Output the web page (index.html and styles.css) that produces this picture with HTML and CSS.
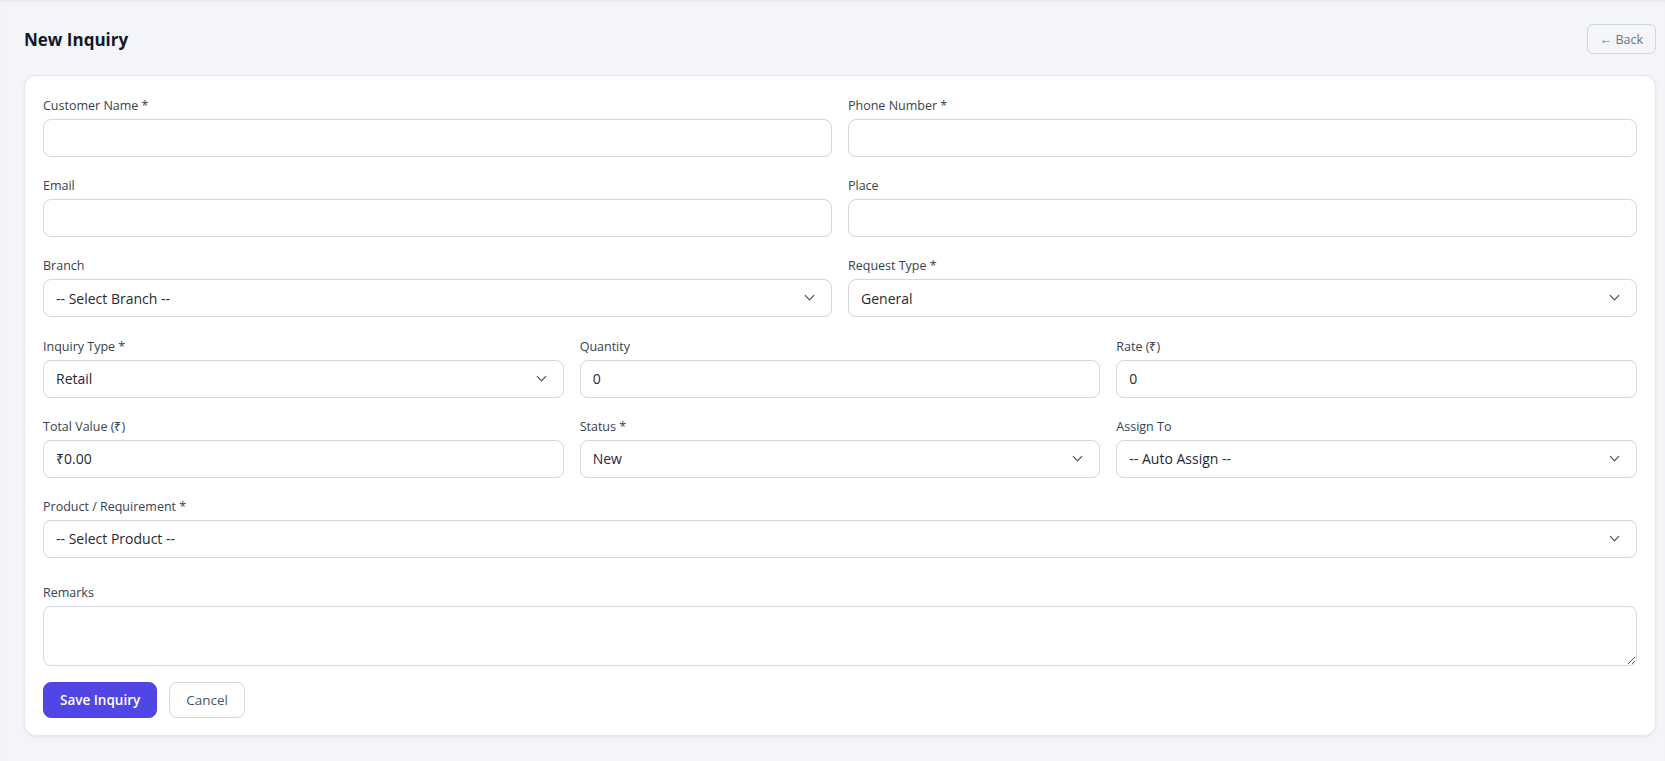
FILE: index.html
```html
<!DOCTYPE html>
<html>
<head>
  <link rel="stylesheet" href="styles.css">
</head>
<body>
  <div class="page">
    <div class="page-header">
      <h2>New Inquiry</h2>
      <button type="button" class="btn-back">&larr; Back</button>
    </div>

    <form class="card">
      <div class="form-row">
        <div class="form-group">
          <label for="customerName">Customer Name *</label>
          <input type="text" id="customerName">
        </div>
        <div class="form-group">
          <label for="phone">Phone Number *</label>
          <input type="text" id="phone">
        </div>
      </div>

      <div class="form-row">
        <div class="form-group">
          <label for="email">Email</label>
          <input type="email" id="email">
        </div>
        <div class="form-group">
          <label for="place">Place</label>
          <input type="text" id="place">
        </div>
      </div>

      <div class="form-row">
        <div class="form-group">
          <label for="branch">Branch</label>
          <div class="select-wrap">
            <select id="branch">
              <option>-- Select Branch --</option>
            </select>
          </div>
        </div>
        <div class="form-group">
          <label for="requestType">Request Type *</label>
          <div class="select-wrap">
            <select id="requestType">
              <option>General</option>
            </select>
          </div>
        </div>
      </div>

      <div class="form-row cols-3">
        <div class="form-group">
          <label for="inquiryType">Inquiry Type *</label>
          <div class="select-wrap">
            <select id="inquiryType">
              <option>Retail</option>
            </select>
          </div>
        </div>
        <div class="form-group">
          <label for="quantity">Quantity</label>
          <input type="number" id="quantity" value="0">
        </div>
        <div class="form-group">
          <label for="rate">Rate (₹)</label>
          <input type="number" id="rate" value="0">
        </div>
      </div>

      <div class="form-row cols-3">
        <div class="form-group">
          <label for="totalValue">Total Value (₹)</label>
          <input type="text" id="totalValue" value="₹0.00" readonly>
        </div>
        <div class="form-group">
          <label for="status">Status *</label>
          <div class="select-wrap">
            <select id="status">
              <option>New</option>
            </select>
          </div>
        </div>
        <div class="form-group">
          <label for="assignTo">Assign To</label>
          <div class="select-wrap">
            <select id="assignTo">
              <option>-- Auto Assign --</option>
            </select>
          </div>
        </div>
      </div>

      <div class="form-row cols-1">
        <div class="form-group">
          <label for="product">Product / Requirement *</label>
          <div class="select-wrap">
            <select id="product">
              <option>-- Select Product --</option>
            </select>
          </div>
        </div>
      </div>

      <div class="form-group remarks">
        <label for="remarks">Remarks</label>
        <textarea id="remarks"></textarea>
      </div>

      <div class="form-actions">
        <button type="submit" class="btn-primary">Save Inquiry</button>
        <button type="button" class="btn-secondary">Cancel</button>
      </div>
    </form>
  </div>
</body>
</html>
```

FILE: styles.css
```css
body {
  font-family: "Segoe UI", "Open Sans", sans-serif;
  margin: 0;
  background: #f4f5f9;
  color: #1f2937;
  min-height: 100vh;
  box-shadow: inset 0 2px 3px -1px rgba(0, 0, 0, 0.08);
}

.page {
  padding: 24px 9px 24px 24px;
}

.page-header {
  display: flex;
  align-items: center;
  justify-content: space-between;
  height: 30px;
  margin-bottom: 21px;
}

.page-header h2 {
  margin: 0;
  font-size: 17px;
  font-weight: 700;
  color: #111827;
}

.btn-back {
  height: 30px;
  padding: 0 12px;
  font-family: inherit;
  font-size: 12.5px;
  color: #6b7280;
  background: transparent;
  border: 1px solid #d4d6dd;
  border-radius: 6px;
  cursor: pointer;
}

.card {
  display: block;
  background: #fff;
  border: 1px solid #e5e7eb;
  border-radius: 12px;
  padding: 18px 18px 17px;
  box-shadow: 0 1px 3px rgba(0, 0, 0, 0.08);
}

.form-row {
  display: grid;
  grid-template-columns: 1fr 1fr;
  column-gap: 16px;
  margin-bottom: 17.2px;
}

.form-row.cols-3 {
  grid-template-columns: 1fr 1fr 1fr;
}

.form-row.cols-1 {
  grid-template-columns: 1fr;
}

.form-group label {
  display: block;
  font-size: 12.5px;
  line-height: 19px;
  font-weight: 500;
  color: #374151;
  padding-top: 2px;
  margin-bottom: 4px;
}

.form-group input,
.form-group select,
.form-group textarea {
  display: block;
  width: 100%;
  box-sizing: border-box;
  height: 38px;
  padding: 0 12px;
  font-family: inherit;
  font-size: 14px;
  color: #1f2937;
  background: #fff;
  border: 1px solid #d4d6dd;
  border-radius: 8px;
  outline: none;
}

.form-group input[type="number"] {
  -moz-appearance: textfield;
}

.form-group input::-webkit-outer-spin-button,
.form-group input::-webkit-inner-spin-button {
  -webkit-appearance: none;
  margin: 0;
}

.select-wrap {
  position: relative;
}

.form-group select {
  -webkit-appearance: none;
  appearance: none;
  padding-right: 36px;
}

/* chevron drawn over the select */
.select-wrap::after {
  content: "";
  position: absolute;
  right: 19px;
  top: 13px;
  width: 6px;
  height: 6px;
  border-right: 1.5px solid #374151;
  border-bottom: 1.5px solid #374151;
  transform: rotate(45deg);
  pointer-events: none;
}

.form-group.remarks {
  margin-top: 23px;
  margin-bottom: 16px;
}

.form-group textarea {
  height: 60px;
  padding: 8px 12px;
  resize: vertical;
}

.form-actions {
  display: flex;
  gap: 12px;
}

.btn-primary,
.btn-secondary {
  height: 36px;
  padding: 0 16px;
  font-family: inherit;
  font-size: 13.5px;
  border-radius: 8px;
  cursor: pointer;
}

.btn-primary {
  background: #4f46e5;
  color: #fff;
  font-weight: 600;
  border: 1px solid #4f46e5;
}

.btn-secondary {
  background: #fff;
  color: #4b5563;
  font-weight: 500;
  border: 1px solid #d4d6dd;
}
```
